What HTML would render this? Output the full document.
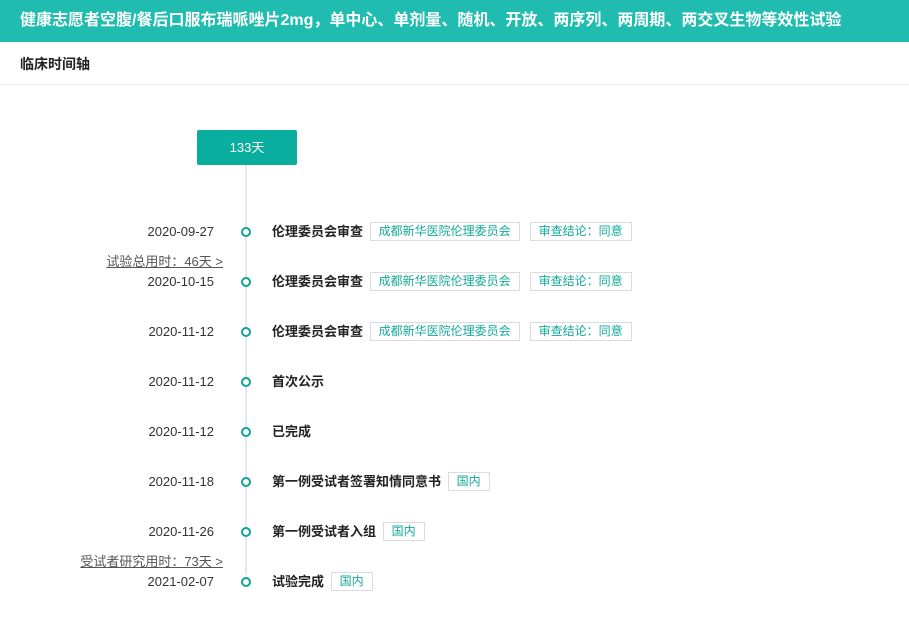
<!DOCTYPE html>
<html><head><meta charset="utf-8"><style>
*{margin:0;padding:0;box-sizing:border-box}
body{width:909px;height:617px;background:#fff;font-family:"Liberation Sans","Noto Sans CJK SC",sans-serif;position:relative;overflow:hidden;color:#333}
.hd{position:absolute;left:0;top:0;width:909px;height:42px;background:#20bcb0;color:#fff;font-weight:bold;font-size:16px;line-height:42px;padding-left:20px;white-space:nowrap}
.sub{position:absolute;left:0;top:42px;width:909px;height:43px;border-bottom:1px solid #e8e8e8;font-weight:bold;font-size:14px;line-height:45px;padding-left:20px;color:#222}
.btn{position:absolute;left:197px;top:130px;width:100px;height:35px;background:#09ae9f;color:#fff;font-size:13px;text-align:center;line-height:35px;border-radius:2px}
.line{position:absolute;left:245px;top:165px;width:2px;height:410px;background:#e6e8ee}
.row{position:absolute;left:0;width:909px;height:20px}
.date{position:absolute;right:695px;top:0;font-size:13px;line-height:20px;color:#333}
.dot{position:absolute;left:241px;top:5px;width:10px;height:10px;border:2px solid #0fa395;border-radius:50%;background:#fff}
.lab{position:absolute;left:272px;top:0;font-size:13px;font-weight:bold;line-height:20px;color:#222;white-space:nowrap}
.tag{display:inline-block;border:1px solid #d8dde0;color:#13a99b;font-size:12px;font-weight:normal;line-height:17px;padding:0 8px;margin-left:3px;vertical-align:top}
.dur{position:absolute;right:686px;font-size:13px;color:#555;text-decoration:underline;line-height:16px;white-space:nowrap}
</style></head><body>
<div class="hd">健康志愿者空腹/餐后口服布瑞哌唑片2mg，单中心、单剂量、随机、开放、两序列、两周期、两交叉生物等效性试验</div>
<div class="sub">临床时间轴</div>
<div class="btn">133天</div>
<div class="line"></div>
<div class="row" style="top:222px"><div class="date">2020-09-27</div><div class="dot"></div><div class="lab">伦理委员会审查 <span class="tag">成都新华医院伦理委员会</span><span class="tag" style="margin-left:10px">审查结论：同意</span></div></div>
<div class="dur" style="top:254px">试验总用时：46天 &gt;</div>
<div class="row" style="top:272px"><div class="date">2020-10-15</div><div class="dot"></div><div class="lab">伦理委员会审查 <span class="tag">成都新华医院伦理委员会</span><span class="tag" style="margin-left:10px">审查结论：同意</span></div></div>
<div class="row" style="top:322px"><div class="date">2020-11-12</div><div class="dot"></div><div class="lab">伦理委员会审查 <span class="tag">成都新华医院伦理委员会</span><span class="tag" style="margin-left:10px">审查结论：同意</span></div></div>
<div class="row" style="top:372px"><div class="date">2020-11-12</div><div class="dot"></div><div class="lab">首次公示</div></div>
<div class="row" style="top:422px"><div class="date">2020-11-12</div><div class="dot"></div><div class="lab">已完成</div></div>
<div class="row" style="top:472px"><div class="date">2020-11-18</div><div class="dot"></div><div class="lab">第一例受试者签署知情同意书 <span class="tag">国内</span></div></div>
<div class="row" style="top:522px"><div class="date">2020-11-26</div><div class="dot"></div><div class="lab">第一例受试者入组 <span class="tag">国内</span></div></div>
<div class="dur" style="top:554px">受试者研究用时：73天 &gt;</div>
<div class="row" style="top:572px"><div class="date">2021-02-07</div><div class="dot"></div><div class="lab">试验完成 <span class="tag">国内</span></div></div>
</body></html>
